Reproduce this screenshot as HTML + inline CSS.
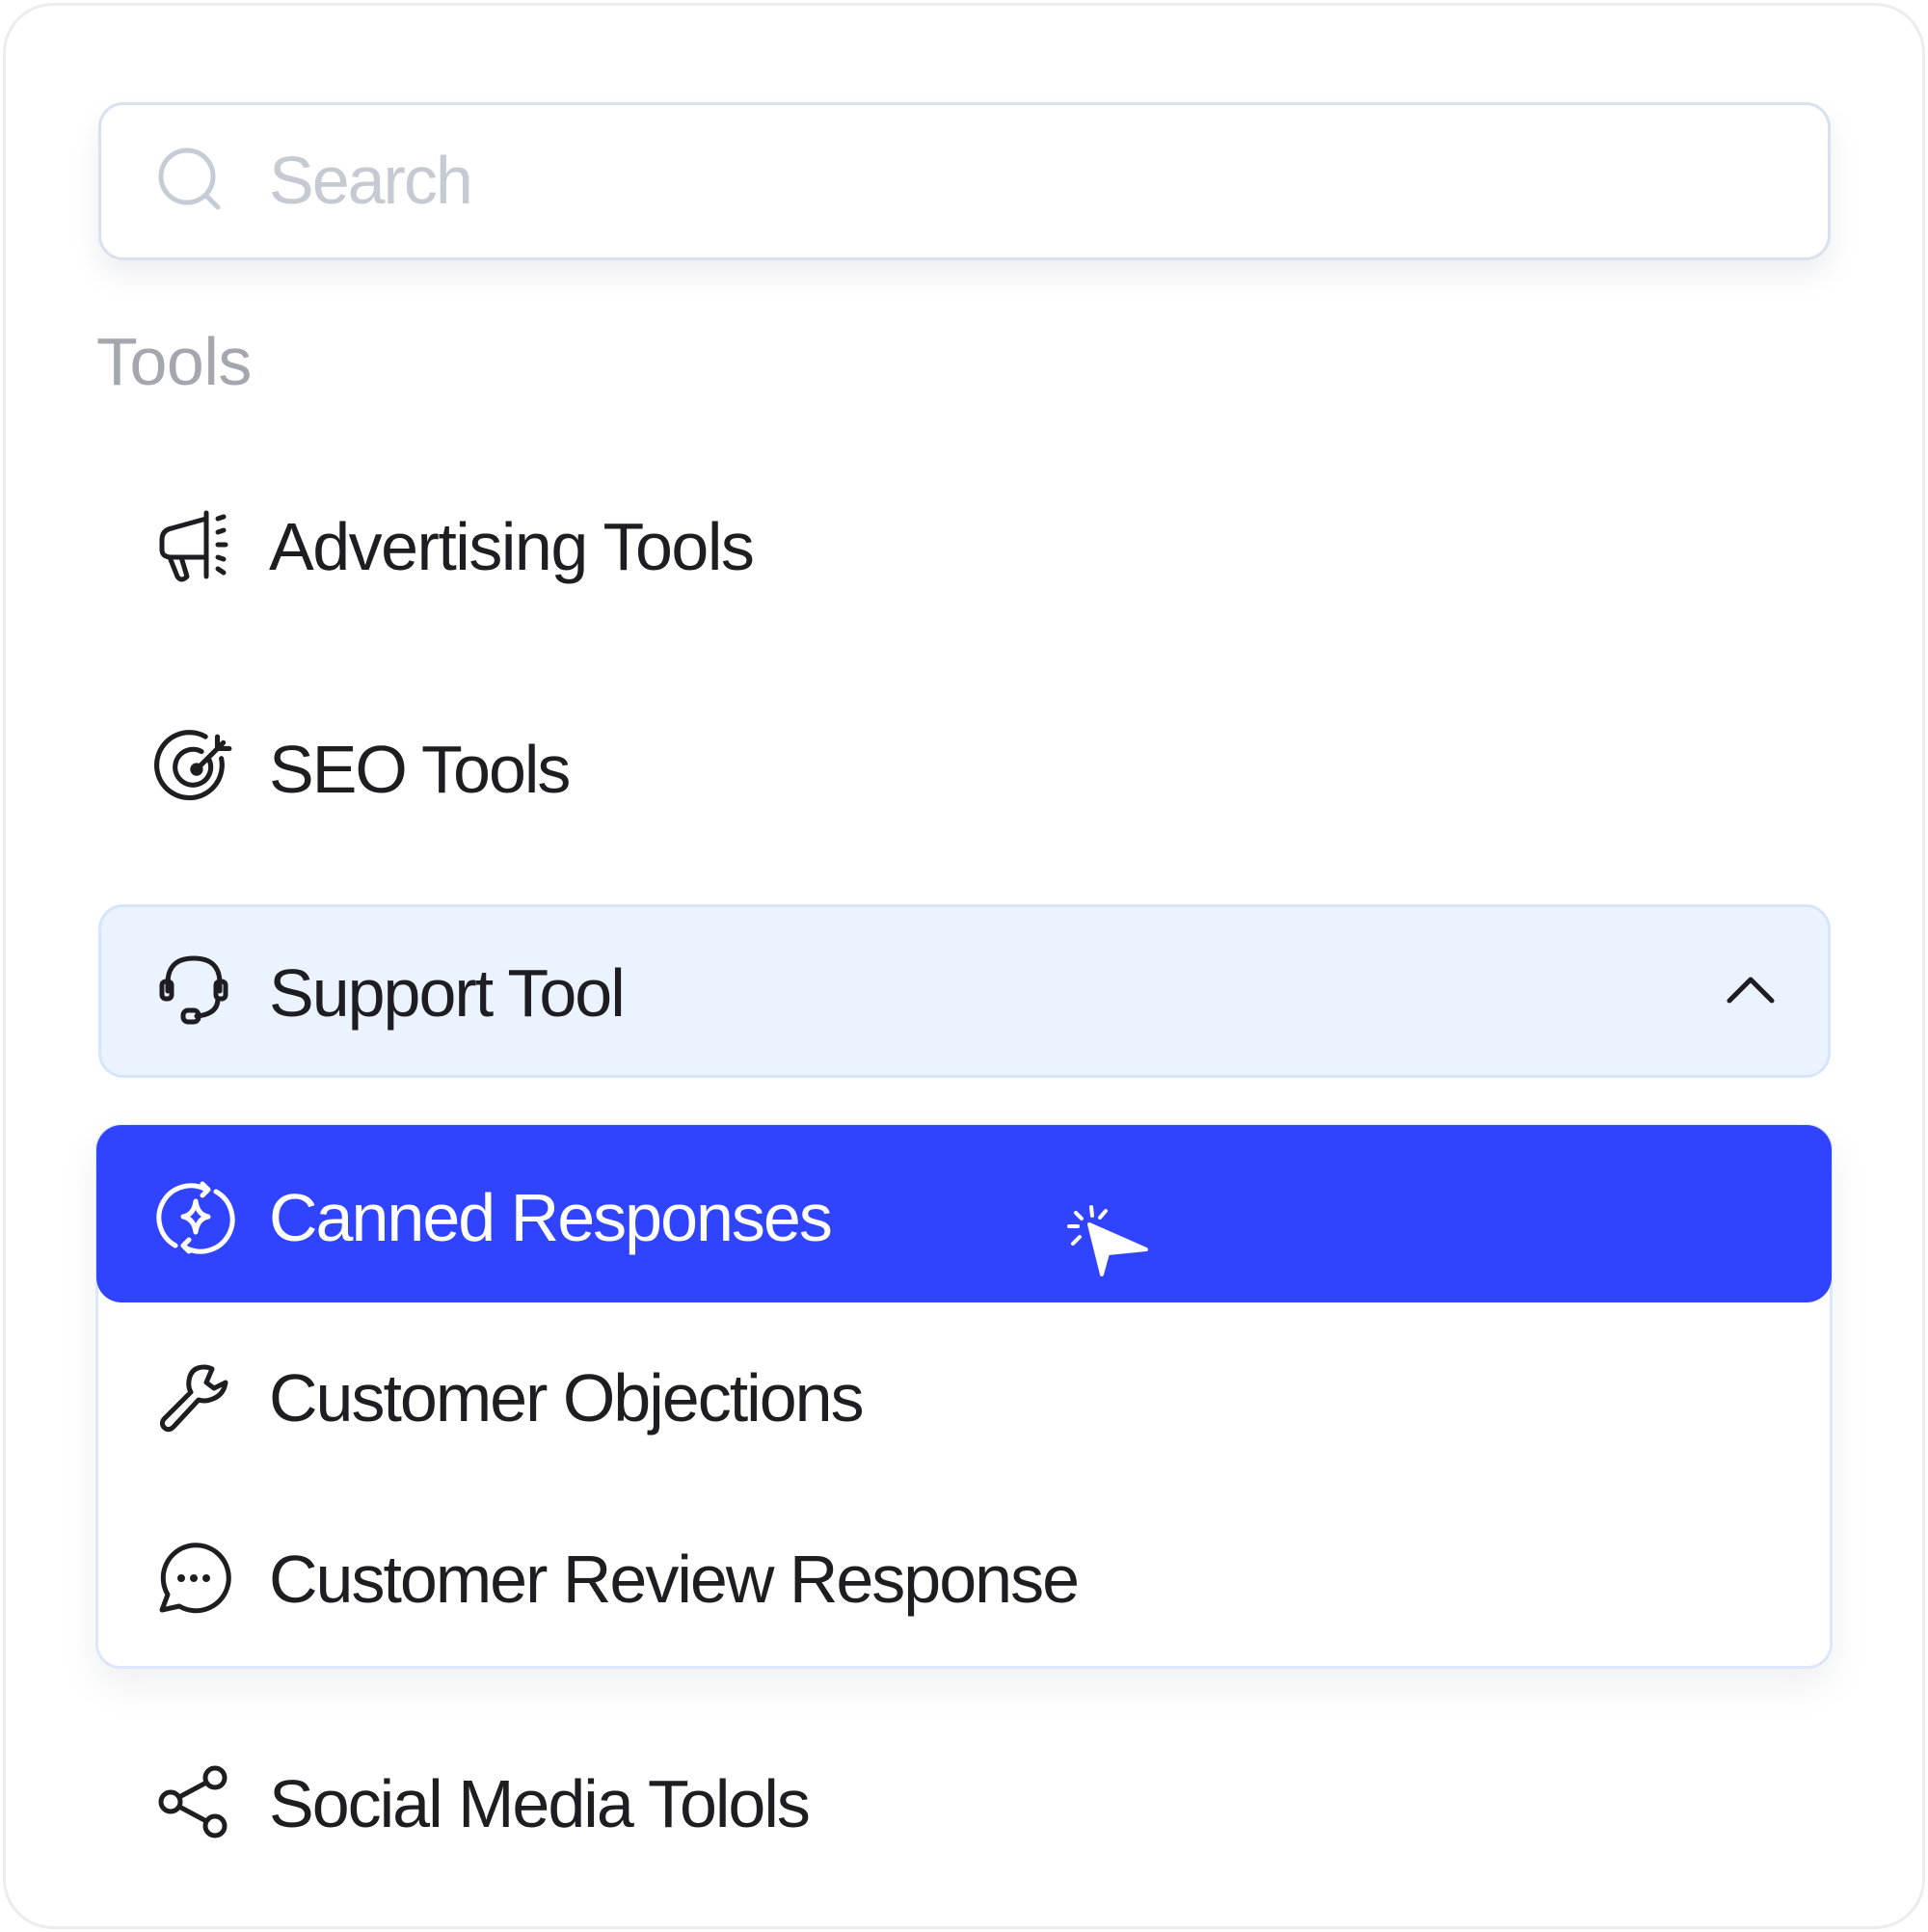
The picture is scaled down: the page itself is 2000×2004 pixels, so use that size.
<!DOCTYPE html>
<html><head><meta charset="utf-8"><style>
*{margin:0;padding:0;box-sizing:border-box}
body{width:2000px;height:2004px;background:#fff;font-family:"Liberation Sans",sans-serif;position:relative;overflow:hidden}
.card{position:absolute;left:3px;top:3px;width:1994px;height:1998px;border:3px solid #ececef;border-radius:52px;background:#fff}
.abs{position:absolute}
.search{left:102px;top:106px;width:1797px;height:164px;border:3px solid #d9e1ee;border-radius:26px;background:#fff;box-shadow:0 16px 30px rgba(30,40,70,0.08)}
.t{position:absolute;font-size:70px;letter-spacing:-2px;color:#1e1e22;line-height:1;white-space:nowrap}
svg{position:absolute;overflow:visible}
.ic{fill:none;stroke:#1e1e22;stroke-width:5;stroke-linecap:round;stroke-linejoin:round}
</style></head><body>
<div class="card"></div>
<div class="abs search"></div>
<svg style="left:163px;top:152px" width="70" height="70" viewBox="0 0 70 70"><circle cx="31" cy="31" r="27" fill="none" stroke="#c6ccd5" stroke-width="5"/><path d="M51 51L63 63" stroke="#c6ccd5" stroke-width="5" stroke-linecap="round"/></svg>
<div class="t" style="left:279px;top:152px;color:#c5cad3">Search</div>
<div class="t" style="left:100px;top:340px;color:#a4a7ae;font-size:70px;letter-spacing:-0.5px">Tools</div>

<svg style="left:164px;top:528px" width="76" height="76" viewBox="0 0 76 76" class="ic"><path d="M50 4V70"/><path d="M50 10L14 20Q4 22 4 32V42Q4 50 14 50H50"/><path d="M12 50L20 70Q24 76 30 70L24 50"/><path d="M62 10L68 8M62 37H70M62 62L68 66M62 24L68 22M62 50L68 52"/></svg>
<div class="t" style="left:279px;top:532px;letter-spacing:-1.5px">Advertising Tools</div>

<svg style="left:168px;top:758px" width="76" height="76" viewBox="0 0 74 74" class="ic"><path d="M60 28A33 33 0 1 1 44 6"/><path d="M48 30A18 18 0 1 1 40 21"/><circle cx="35" cy="39" r="4"/><path d="M35 39L62 12M56 6V18H68"/></svg>
<div class="t" style="left:279px;top:763px">SEO Tools</div>

<div class="abs" style="left:102px;top:938px;width:1797px;height:180px;background:#ebf3fe;border:3px solid #d6e5fa;border-radius:26px"></div>
<svg style="left:164px;top:990px" width="74" height="76" viewBox="0 0 74 76" class="ic"><path d="M10 38V30Q10 4 37 4Q64 4 64 30V38"/><rect x="4" y="28" width="10" height="18" rx="4"/><rect x="60" y="28" width="10" height="18" rx="4"/><path d="M62 46Q62 62 40 64"/><rect x="26" y="58" width="16" height="12" rx="5"/></svg>
<div class="t" style="left:279px;top:995px">Support Tool</div>
<svg style="left:1790px;top:1012px" width="52" height="30" viewBox="0 0 52 30"><path d="M4 26L26 4L48 26" fill="none" stroke="#1e1e22" stroke-width="5" stroke-linecap="round" stroke-linejoin="round"/></svg>

<div class="abs" style="left:99px;top:1166px;width:1802px;height:565px;background:#fff;border:3px solid #dce7f8;border-radius:26px;box-shadow:0 18px 40px rgba(30,40,70,0.07)"></div>
<div class="abs" style="left:100px;top:1167px;width:1800px;height:184px;background:#3043ff;border-radius:26px"></div>
<svg style="left:166px;top:1224px" width="74" height="78" viewBox="0 0 74 78" fill="none" stroke="#fff" stroke-width="5" stroke-linecap="round" stroke-linejoin="round"><path d="M16 68A32 32 0 0 1 48 10"/><path d="M58 12A32 32 0 0 1 26 70"/><path d="M44 4L50 10L44 16M30 62L24 68L30 74"/><path d="M37 22Q39 36 50 38Q39 40 37 54Q35 40 24 38Q35 36 37 22Z"/></svg>
<div class="t" style="left:279px;top:1228px;color:#fff">Canned Responses</div>
<svg style="left:1105px;top:1248px" width="90" height="80" viewBox="0 0 90 80" fill="none" stroke="#fff" stroke-width="4" stroke-linecap="round"><path d="M25 22L38 74L44 52L84 48Z" fill="#fff" stroke-linejoin="round"/><path d="M27 4L28 13M42 8L36 15M4 24H13M8 42L15 35M11 10L17 16"/></svg>

<svg style="left:164px;top:1412px" width="74" height="74" viewBox="0 0 74 74" class="ic"><path d="M48 6Q34 6 32 20Q31 27 34 32L6 60Q2 66 8 70Q12 72 16 68L42 40Q48 42 54 40Q68 36 70 22L58 28L50 22L56 8Q52 6 48 6Z"/></svg>
<div class="t" style="left:279px;top:1415px">Customer Objections</div>

<svg style="left:164px;top:1600px" width="74" height="74" viewBox="0 0 74 74" class="ic"><path d="M10 54A34 34 0 1 1 22 66L4 70Z"/><circle cx="24" cy="37" r="1.5" fill="#1e1e22"/><circle cx="37" cy="37" r="1.5" fill="#1e1e22"/><circle cx="50" cy="37" r="1.5" fill="#1e1e22"/></svg>
<div class="t" style="left:279px;top:1603px">Customer Review Response</div>

<svg style="left:164px;top:1832px" width="74" height="74" viewBox="0 0 74 74" class="ic"><circle cx="13" cy="37" r="10"/><circle cx="59" cy="12" r="10"/><circle cx="59" cy="62" r="10"/><path d="M22 32L50 17M22 42L50 57"/></svg>
<div class="t" style="left:279px;top:1836px">Social Media Tolols</div>
</body></html>
